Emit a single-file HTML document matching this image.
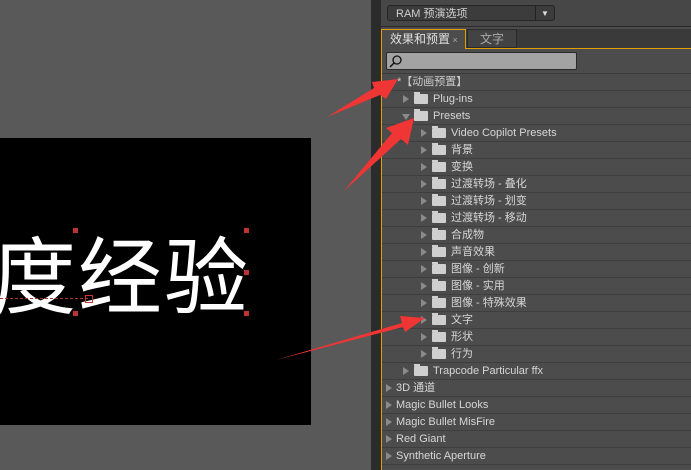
<!DOCTYPE html><html style="overflow:hidden;width:691px;height:470px"><head><meta charset="utf-8"><style>
body{margin:0;width:691px;height:470px;overflow:hidden;background:#595959;font-family:"Liberation Sans","Noto Sans CJK SC",sans-serif;position:relative}
.a{position:absolute}
.row{position:absolute;left:382px;width:309px;height:17px;border-bottom:1px solid #3e3e3e;box-sizing:border-box;color:#d6d6d6;font-size:11px;line-height:17px;white-space:nowrap}
.tri{position:absolute;top:4px;width:0;height:0;border-top:4px solid transparent;border-bottom:4px solid transparent;border-left:6px solid #8a8a8a}
.fd{position:absolute;top:3px;width:14px;height:10px;background:#cfcfcf;border-radius:1px}
.fd:before{content:"";position:absolute;left:0;top:-2px;width:6px;height:2px;background:#cfcfcf}
</style></head><body>
<div class="a" style="left:0;top:138px;width:311px;height:287px;background:#000"></div>
<div class="a" style="left:-8px;top:222px;color:#fff;font-size:84px;line-height:100px;letter-spacing:2px;font-family:'Noto Sans CJK SC',sans-serif;font-weight:400">度经验</div>
<div class="a" style="left:0;top:298px;width:88px;border-top:1px dashed #a33"></div>
<div class="a" style="left:73px;top:228px;width:5px;height:5px;background:#b33"></div>
<div class="a" style="left:244px;top:228px;width:5px;height:5px;background:#b33"></div>
<div class="a" style="left:244px;top:270px;width:5px;height:5px;background:#b33"></div>
<div class="a" style="left:73px;top:311px;width:5px;height:5px;background:#b33"></div>
<div class="a" style="left:244px;top:311px;width:5px;height:5px;background:#b33"></div>
<div class="a" style="left:85px;top:295px;width:6px;height:6px;border:1px solid #c33"></div>
<div class="a" style="left:371px;top:0;width:10px;height:470px;background:#2b2b2b"></div>
<div class="a" style="left:381px;top:0;width:310px;height:470px;background:#4c4c4c"></div>
<div class="a" style="left:381px;top:0;width:310px;height:26px;background:#474747;border-bottom:1px solid #2a2a2a"></div>
<div class="a" style="left:387px;top:5px;width:168px;height:16px;background:#3c3c3c;border:1px solid #262626;border-radius:3px;color:#d0d0d0;font-size:11px;line-height:16px;box-sizing:border-box;padding-left:8px">RAM 预演选项<span style="position:absolute;right:0;top:0;width:18px;height:14px;border-left:1px solid #222;text-align:center;font-size:8px;color:#ddd">▼</span></div>
<div class="a" style="left:381px;top:29px;width:310px;height:19px;background:#3a3a3a"></div>
<div class="a" style="left:381px;top:29px;width:85px;height:20px;background:#4c4c4c;border:1px solid #e0a000;border-bottom:none;box-sizing:border-box;color:#e0e0e0;font-size:12px;line-height:18px;padding-left:8px">效果和预置<span style="font-size:9px;color:#aaa"> ×</span></div>
<div class="a" style="left:467px;top:29px;width:50px;height:19px;background:#434343;border:1px solid #2a2a2a;box-sizing:border-box;color:#aaa;font-size:12px;line-height:18px;text-align:center">文字</div>
<div class="a" style="left:466px;top:48px;width:225px;border-top:1px solid #e0a000"></div>
<div class="a" style="left:381px;top:29px;width:1px;height:441px;background:#e0a000"></div>
<div class="a" style="left:386px;top:52px;width:191px;height:18px;background:#a3a3a3;border:1px solid #2a2a2a;border-radius:2px;box-sizing:border-box"><svg width="14" height="14" style="position:absolute;left:2px;top:1px"><circle cx="8" cy="6" r="4" fill="none" stroke="#111" stroke-width="1.3"/><line x1="5" y1="9" x2="1" y2="13" stroke="#111" stroke-width="1.5"/></svg></div>
<div class="a" style="left:382px;top:73px;width:309px;border-top:1px solid #3a3a3a"></div>

<div class="row" style="top:74px"><span class="a" style="left:4px;top:8px;width:10px;border-top:1px solid #888"></span><span class="a" style="left:15px;color:#ccc">*【动画预置】</span></div>
<div class="row" style="top:91px"><span class="tri" style="left:21px"></span><span class="fd" style="left:32px"></span><span class="a" style="left:51px">Plug-ins</span></div>
<div class="row" style="top:108px"><span class="a" style="left:20px;top:6px;border-left:4px solid transparent;border-right:4px solid transparent;border-top:6px solid #8a8a8a"></span><span class="fd" style="left:32px"></span><span class="a" style="left:51px">Presets</span></div>
<div class="row" style="top:125px"><span class="tri" style="left:39px"></span><span class="fd" style="left:50px"></span><span class="a" style="left:69px">Video Copilot Presets</span></div>
<div class="row" style="top:142px"><span class="tri" style="left:39px"></span><span class="fd" style="left:50px"></span><span class="a" style="left:69px">背景</span></div>
<div class="row" style="top:159px"><span class="tri" style="left:39px"></span><span class="fd" style="left:50px"></span><span class="a" style="left:69px">变换</span></div>
<div class="row" style="top:176px"><span class="tri" style="left:39px"></span><span class="fd" style="left:50px"></span><span class="a" style="left:69px">过渡转场 - 叠化</span></div>
<div class="row" style="top:193px"><span class="tri" style="left:39px"></span><span class="fd" style="left:50px"></span><span class="a" style="left:69px">过渡转场 - 划变</span></div>
<div class="row" style="top:210px"><span class="tri" style="left:39px"></span><span class="fd" style="left:50px"></span><span class="a" style="left:69px">过渡转场 - 移动</span></div>
<div class="row" style="top:227px"><span class="tri" style="left:39px"></span><span class="fd" style="left:50px"></span><span class="a" style="left:69px">合成物</span></div>
<div class="row" style="top:244px"><span class="tri" style="left:39px"></span><span class="fd" style="left:50px"></span><span class="a" style="left:69px">声音效果</span></div>
<div class="row" style="top:261px"><span class="tri" style="left:39px"></span><span class="fd" style="left:50px"></span><span class="a" style="left:69px">图像 - 创新</span></div>
<div class="row" style="top:278px"><span class="tri" style="left:39px"></span><span class="fd" style="left:50px"></span><span class="a" style="left:69px">图像 - 实用</span></div>
<div class="row" style="top:295px"><span class="tri" style="left:39px"></span><span class="fd" style="left:50px"></span><span class="a" style="left:69px">图像 - 特殊效果</span></div>
<div class="row" style="top:312px"><span class="tri" style="left:39px"></span><span class="fd" style="left:50px"></span><span class="a" style="left:69px">文字</span></div>
<div class="row" style="top:329px"><span class="tri" style="left:39px"></span><span class="fd" style="left:50px"></span><span class="a" style="left:69px">形状</span></div>
<div class="row" style="top:346px"><span class="tri" style="left:39px"></span><span class="fd" style="left:50px"></span><span class="a" style="left:69px">行为</span></div>
<div class="row" style="top:363px"><span class="tri" style="left:21px"></span><span class="fd" style="left:32px"></span><span class="a" style="left:51px">Trapcode Particular ffx</span></div>
<div class="row" style="top:380px"><span class="tri" style="left:4px"></span><span class="a" style="left:14px">3D 通道</span></div>
<div class="row" style="top:397px"><span class="tri" style="left:4px"></span><span class="a" style="left:14px">Magic Bullet Looks</span></div>
<div class="row" style="top:414px"><span class="tri" style="left:4px"></span><span class="a" style="left:14px">Magic Bullet MisFire</span></div>
<div class="row" style="top:431px"><span class="tri" style="left:4px"></span><span class="a" style="left:14px">Red Giant</span></div>
<div class="row" style="top:448px"><span class="tri" style="left:4px"></span><span class="a" style="left:14px">Synthetic Aperture</span></div>
<div class="row" style="top:465px;height:5px;border:none"></div>

<svg class="a" style="left:0;top:0" width="691" height="470">
<polygon points="327,117 374,88 372,82 398,79 386,99 380,95" fill="#f03535"/>
<polygon points="344,191 392,133 386,128 414,118 408,145 401,139" fill="#f03535"/>
<polygon points="276,360 402,323 400,316 425,318 405,332 403,327" fill="#f03535"/>
</svg>
</body></html>
